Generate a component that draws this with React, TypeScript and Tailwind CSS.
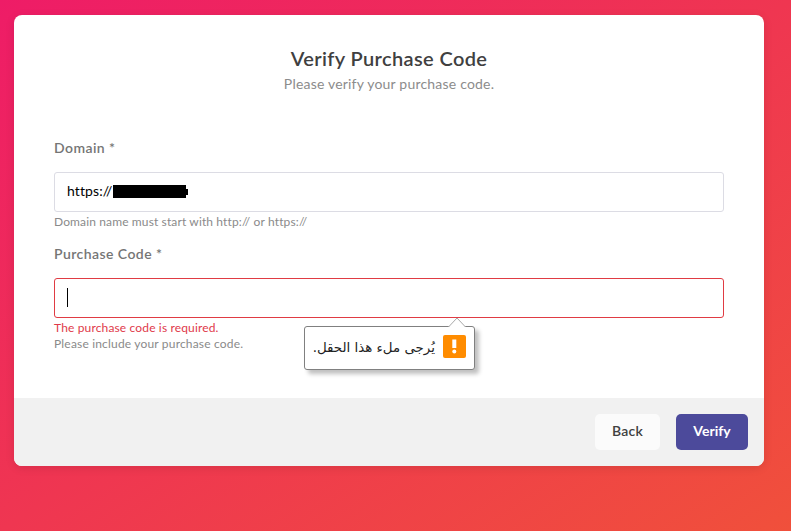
import type { ReactNode } from "react";

function Label({ children }: { children: ReactNode }) {
  return (
    <label className="block h-[22px] whitespace-nowrap text-[14px] font-semibold leading-[20px] tracking-[0.43px] text-[#757575]">
      {children}
    </label>
  );
}

function ValidationBubble() {
  return (
    <div className="absolute left-[249px] top-[39px] z-10">
      <div className="flex h-[44px] w-[171px] items-center justify-end gap-[8px] rounded-[3px] border border-[#808080] bg-white pr-[8px] shadow-[4px_4px_4px_rgba(0,0,0,0.25)] mt-[8px]">
        <span
          dir="rtl"
          className="whitespace-nowrap font-['DejaVu_Sans',sans-serif] text-[13.4px] leading-[20px] text-[#222]"
        >
          يُرجى ملء هذا الحقل.
        </span>
        <span className="relative -top-[2px] flex h-[23px] w-[23px] shrink-0 items-center justify-center rounded-[2px] bg-[#ff8c00]">
          <svg width="23" height="23" viewBox="0 0 23 23" fill="#fff">
            <rect x="9.3" y="4.5" width="4" height="8.5" />
            <circle cx="11.3" cy="16.5" r="2" />
          </svg>
        </span>
      </div>
      {/* pointer */}
      <svg className="absolute -top-px left-[144px]" width="18" height="10" viewBox="0 0 18 10">
        <path d="M.5 10 9 1l8.5 9" fill="#fff" stroke="#a8a8a8" />
      </svg>
    </div>
  );
}

export default function App() {
  return (
    <main className="h-screen overflow-hidden bg-linear-to-br/srgb from-[#ee1c67] to-[#f0503b] pl-[14px] pt-[15px] font-[Lato,sans-serif]">
      <form
        className="h-[451px] w-[750px] rounded-lg bg-white shadow-[0_2px_10px_rgba(0,0,0,0.1)]"
        onSubmit={(e) => e.preventDefault()}
      >
        <div className="h-[383px] px-10 pt-[31px]">
          <header className="text-center">
            <h1 className="text-[20px] font-semibold leading-6 tracking-[0.38px] text-[#404040]">Verify Purchase Code</h1>
            <p className="mt-px text-[14px] leading-[26px] tracking-[0.2px] text-[#8c8c8c]">
              Please verify your purchase code.
            </p>
          </header>

          <div className="mt-[41px]">
            <Label>Domain *</Label>
            <div className="mt-3 flex h-10 items-center rounded-[3px] border border-[#dcdce4] px-3 text-[14px] text-black">
              <span className="-mt-[3px] w-[46px] whitespace-nowrap tracking-[0.1px]">https://</span>
              <span className="-mt-px h-[13px] w-[73px] bg-black" />
              <span className="-mt-px h-[6px] w-[2px] bg-black" />
            </div>
            <p className="mt-[2px] text-[12px] leading-4 tracking-[0.13px] text-[#8a8a8a]">
              Domain name must start with http:// or https://
            </p>
          </div>

          <div className="mt-[14px]">
            <Label>Purchase Code *</Label>
            <div className="relative mt-3 flex h-10 items-center rounded-[3px] border border-[#e03b43] px-3">
              <span className="-mt-px h-[19px] w-px bg-black" />
              <ValidationBubble />
            </div>
            <p className="mt-[2px] text-[12px] leading-4 tracking-[0.15px] text-[#e0394a]">
              The purchase code is required.
            </p>
            <p className="text-[12px] leading-4 tracking-[0.18px] text-[#8a8a8a]">
              Please include your purchase code.
            </p>
          </div>
        </div>

        <footer className="flex h-[68px] items-center justify-end gap-4 rounded-b-lg bg-[#f1f1f1] px-4 text-[14px] font-bold">
          <button className="h-9 w-[65px] rounded-[5px] bg-[#fbfbfb] pb-[3px] font-semibold tracking-[0.2px] text-[#404040]">
            Back
          </button>
          <button className="h-9 w-[72px] rounded-[5px] bg-[#4c4a9b] pb-[3px] text-white">Verify</button>
        </footer>
      </form>
    </main>
  );
}
